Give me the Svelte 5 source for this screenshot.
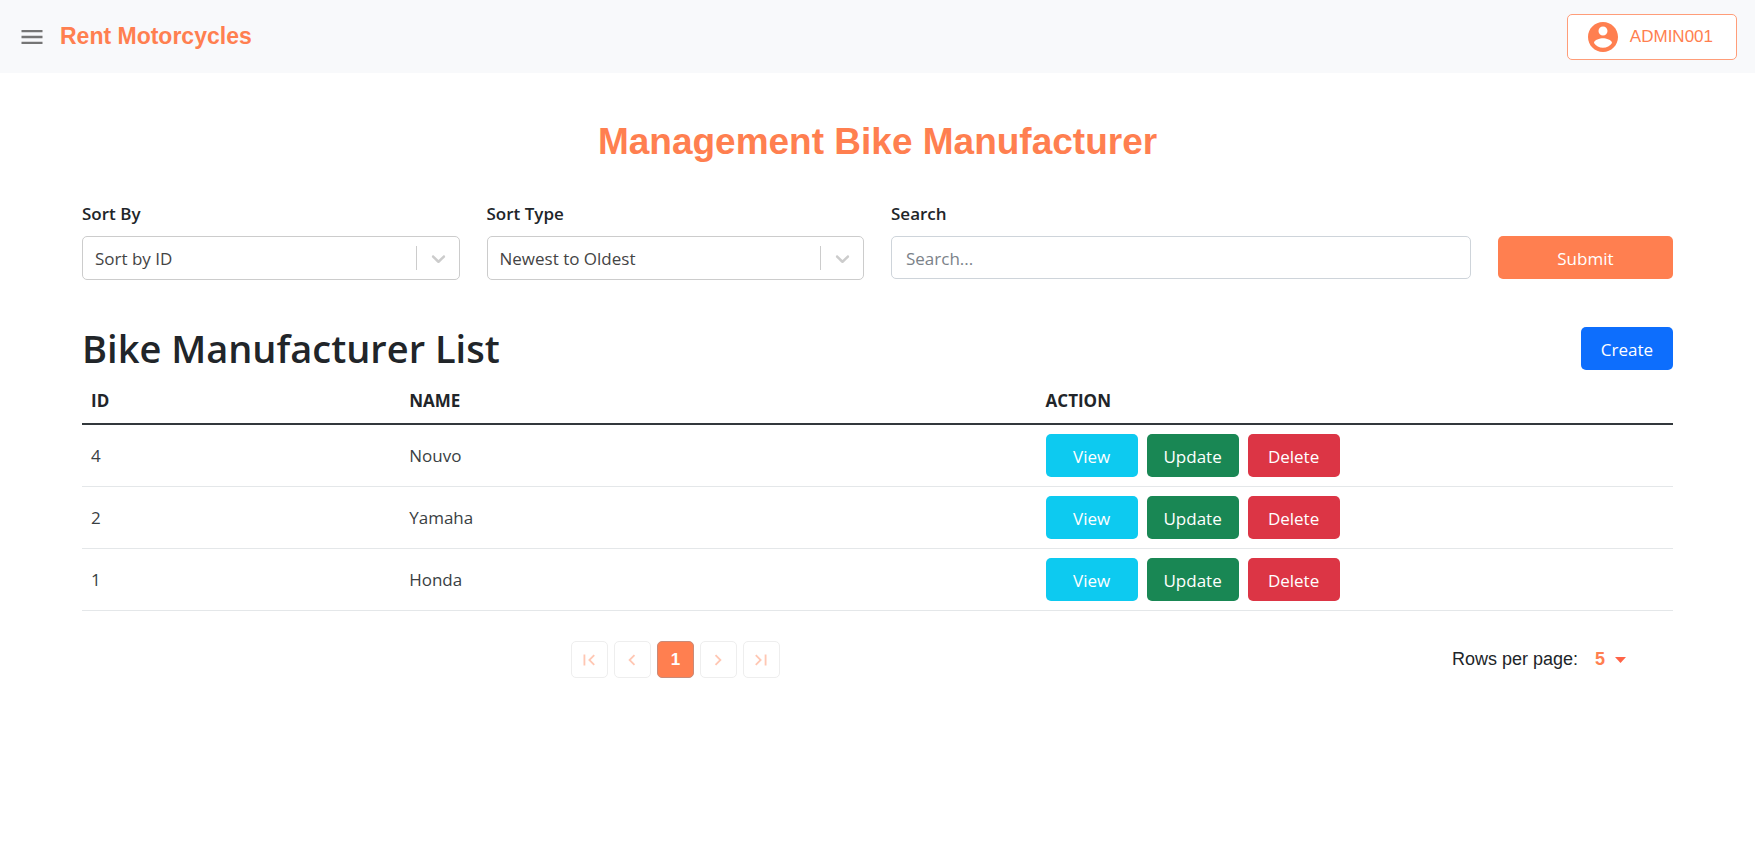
<script>
  const manufacturers = [
    { id: 4, name: 'Nouvo' },
    { id: 2, name: 'Yamaha' },
    { id: 1, name: 'Honda' },
  ];

  let sortBy = $state('id');
  let sortType = $state('desc');
  let search = $state('');
  let pageSize = $state(5);
</script>

<header class="topbar">
  <button class="menu" aria-label="Menu">
    <svg width="28" height="28" viewBox="0 0 24 24" fill="#757575">
      <path d="M3 18h18v-2H3v2zm0-5h18v-2H3v2zm0-7v2h18V6H3z" />
    </svg>
  </button>
  <a class="brand" href="#home">Rent Motorcycles</a>
  <button class="account">
    <svg width="36" height="36" viewBox="0 0 24 24" fill="currentColor">
      <path d="M12 2C6.480 2 2 6.480 2 12s4.480 10 10 10 10-4.480 10-10S17.520 2 12 2zm0 3c1.660 0 3 1.340 3 3s-1.340 3-3 3-3-1.340-3-3 1.340-3 3-3zm0 14.200c-2.500 0-4.710-1.280-6-3.220.030-1.990 4-3.080 6-3.080 1.990 0 5.970 1.090 6 3.080-1.290 1.940-3.500 3.220-6 3.220z" />
    </svg>
    <span>ADMIN001</span>
  </button>
</header>

<main>
  <h1>Management Bike Manufacturer</h1>

  <form class="filters" onsubmit={(e) => e.preventDefault()}>
    <div class="field">
      <label for="sort-by">Sort By</label>
      <div class="select">
        <select id="sort-by" bind:value={sortBy}>
          <option value="id">Sort by ID</option>
          <option value="name">Sort by Name</option>
        </select>
        <span class="indicator">
          <svg width="23" height="23" viewBox="0 0 20 20" fill="#cccccc">
            <path d="M4.516 7.548c0.436-0.446 1.043-0.481 1.576 0l3.908 3.747 3.908-3.747c0.533-0.481 1.141-0.446 1.574 0 0.436 0.445 0.408 1.197 0 1.615-0.406 0.418-4.695 4.502-4.695 4.502-0.217 0.223-0.502 0.335-0.787 0.335s-0.570-0.112-0.789-0.335c0 0-4.287-4.084-4.695-4.502s-0.436-1.170 0-1.615z" />
          </svg>
        </span>
      </div>
    </div>
    <div class="field">
      <label for="sort-type">Sort Type</label>
      <div class="select">
        <select id="sort-type" bind:value={sortType}>
          <option value="desc">Newest to Oldest</option>
          <option value="asc">Oldest to Newest</option>
        </select>
        <span class="indicator">
          <svg width="23" height="23" viewBox="0 0 20 20" fill="#cccccc">
            <path d="M4.516 7.548c0.436-0.446 1.043-0.481 1.576 0l3.908 3.747 3.908-3.747c0.533-0.481 1.141-0.446 1.574 0 0.436 0.445 0.408 1.197 0 1.615-0.406 0.418-4.695 4.502-4.695 4.502-0.217 0.223-0.502 0.335-0.787 0.335s-0.570-0.112-0.789-0.335c0 0-4.287-4.084-4.695-4.502s-0.436-1.170 0-1.615z" />
          </svg>
        </span>
      </div>
    </div>
    <div class="field wide">
      <label for="search">Search</label>
      <input id="search" type="text" placeholder="Search..." bind:value={search} />
    </div>
    <button class="btn submit">Submit</button>
  </form>

  <div class="list-head">
    <h2>Bike Manufacturer List</h2>
    <button class="btn create">Create</button>
  </div>

  <table>
    <thead>
      <tr>
        <th class="col-id">ID</th>
        <th class="col-name">NAME</th>
        <th>ACTION</th>
      </tr>
    </thead>
    <tbody>
      {#each manufacturers as item (item.id)}
        <tr>
          <td>{item.id}</td>
          <td>{item.name}</td>
          <td>
            <div class="actions">
              <button class="btn view">View</button>
              <button class="btn update">Update</button>
              <button class="btn delete">Delete</button>
            </div>
          </td>
        </tr>
      {/each}
    </tbody>
  </table>

  <div class="footer">
    <nav class="pages" aria-label="Pages">
      <button disabled aria-label="First page">
        <svg width="22" height="22" viewBox="0 0 24 24"><path d="M18.410 16.590L13.820 12l4.590-4.590L17 6l-6 6 6 6zM6 6h2v12H6z" /></svg>
      </button>
      <button disabled aria-label="Previous page">
        <svg width="22" height="22" viewBox="0 0 24 24"><path d="M15.410 7.410L14 6l-6 6 6 6 1.410-1.410L10.830 12z" /></svg>
      </button>
      <button class="current" aria-current="page">1</button>
      <button disabled aria-label="Next page">
        <svg width="22" height="22" viewBox="0 0 24 24"><path d="M10 6L8.590 7.410 13.170 12l-4.580 4.590L10 18l6-6z" /></svg>
      </button>
      <button disabled aria-label="Last page">
        <svg width="22" height="22" viewBox="0 0 24 24"><path d="M5.590 7.410L10.180 12l-4.590 4.590L7 18l6-6-6-6zM16 6h2v12h-2z" /></svg>
      </button>
    </nav>
    <div class="page-size">
      <label for="page-size">Rows per page:</label>
      <div class="size-select">
        <select id="page-size" bind:value={pageSize}>
          <option value={5}>5</option>
          <option value={10}>10</option>
        </select>
        <svg width="11" height="6" viewBox="0 0 11 6"><path d="M0 0h11L5.500 6z" fill="#ff6347" /></svg>
      </div>
    </div>
  </div>
</main>

<style>
  :global(body) {
    margin: 0;
    background: #fff;
    color: #212529;
    font: 17px/27px 'Open Sans', 'Noto Sans', sans-serif;
  }

  button,
  input,
  select,
  th,
  td {
    box-sizing: border-box;
  }

  button,
  input,
  select {
    margin: 0;
    font: inherit;
    color: inherit;
  }

  button {
    padding: 0;
    border: 0;
    cursor: pointer;
  }

  .topbar {
    display: flex;
    align-items: center;
    box-sizing: border-box;
    height: 73px;
    padding: 0 18px;
    background: #f8f9fb;
    font-family: 'Liberation Sans', Arial, sans-serif;
  }

  .menu {
    display: flex;
    background: none;
  }

  .brand {
    margin-left: 14px;
    color: #ff7f50;
    font-size: 23px;
    font-weight: 700;
    text-decoration: none;
  }

  .account {
    display: flex;
    align-items: center;
    gap: 9px;
    height: 46px;
    margin-left: auto;
    padding: 0 23px 0 17px;
    border: 1px solid #ff9d79;
    border-radius: 5px;
    background: #fff;
    color: #ff7f50;
    font-size: 17px;
  }

  main {
    padding: 46px 82px;
  }

  h1 {
    margin: 0 0 35px;
    color: #ff7f50;
    font: 700 37px/46px 'Liberation Sans', Arial, sans-serif;
    text-align: center;
  }

  .filters {
    display: grid;
    grid-template-columns: repeat(8, minmax(0, 1fr));
    gap: 27px;
    align-items: start;
  }

  .field {
    grid-column: span 2;
    display: grid;
    gap: 9px;
  }

  .wide {
    grid-column: span 3;
  }

  .field label {
    font-weight: 600;
  }

  .select {
    display: grid;
  }

  .select > * {
    grid-area: 1 / 1;
  }

  .select select {
    appearance: none;
    width: 100%;
    height: 44px;
    padding: 0 60px 0 12px;
    border: 1px solid #cccccc;
    border-radius: 5px;
    background: #fff;
    color: #444;
  }

  .indicator {
    justify-self: end;
    align-self: center;
    display: flex;
    align-items: center;
    height: 24px;
    padding: 0 10px;
    border-left: 1px solid #cccccc;
    pointer-events: none;
  }

  .field input {
    width: 100%;
    height: 43px;
    padding: 2px 14px 0;
    border: 1px solid #ced4da;
    border-radius: 5px;
  }

  .field input::placeholder {
    color: #7b8289;
    opacity: 1;
  }

  .btn {
    height: 43px;
    padding-top: 2px;
    border-radius: 5px;
    color: #fff;
  }

  .submit {
    margin-top: 36px;
    background: #ff7f50;
  }

  .list-head {
    display: flex;
    align-items: center;
    justify-content: space-between;
    margin: 42px 0 4px;
  }

  h2 {
    margin: 0;
    font-size: 38px;
    line-height: 52px;
    font-weight: 600;
  }

  .create {
    width: 92px;
    background: #0d6efd;
  }

  table {
    width: 100%;
    border-collapse: collapse;
    table-layout: fixed;
  }

  .col-id {
    width: 20%;
  }

  .col-name {
    width: 40%;
  }

  th,
  td {
    padding: 9px;
    text-align: left;
  }

  th {
    font-weight: 700;
    border-bottom: 2px solid #32383c;
  }

  td {
    border-bottom: 1px solid #e4e7e9;
    color: #3a3f43;
  }

  .actions {
    display: flex;
    gap: 9px;
  }

  .actions .btn {
    width: 92px;
  }

  .view {
    background: #0dcaf0;
  }

  .update {
    background: #198754;
  }

  .delete {
    background: #dc3545;
  }

  .footer {
    display: grid;
    grid-template-columns: 3fr 1fr;
    align-items: center;
    margin: 30px -13px 0;
    font-family: 'Liberation Sans', Arial, sans-serif;
    font-size: 18px;
  }

  .pages {
    display: flex;
    justify-content: center;
    gap: 6px;
  }

  .pages button {
    display: flex;
    align-items: center;
    justify-content: center;
    width: 37px;
    height: 37px;
    border: 1px solid #eeeeee;
    border-radius: 5px;
    background: #fff;
    fill: #ffc7b3;
  }

  .pages .current {
    border-color: #c98a78;
    background: #ff7f50;
    color: #fff;
    font-size: 17px;
    font-weight: 700;
  }

  .page-size {
    display: flex;
    justify-content: flex-end;
    align-items: center;
    gap: 17px;
    padding-right: 60px;
  }

  .size-select {
    display: grid;
    align-items: center;
  }

  .size-select > * {
    grid-area: 1 / 1;
  }

  .size-select select {
    appearance: none;
    width: 31px;
    height: 27px;
    padding: 0;
    border: 0;
    background: none;
    color: #ff7f50;
    font-weight: 700;
  }

  .size-select svg {
    justify-self: end;
    pointer-events: none;
  }
</style>
